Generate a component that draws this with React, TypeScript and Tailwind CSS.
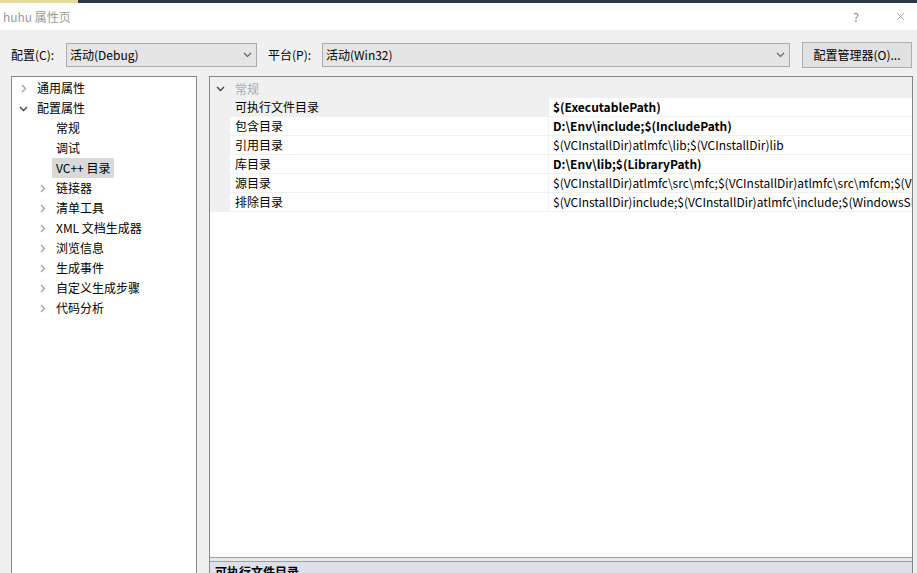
import { X } from 'lucide-react';

type TreeItem = { label: string; level: 0 | 1; state: 'closed' | 'open' | 'none'; selected?: boolean };

const tree: TreeItem[] = [
  { label: '通用属性', level: 0, state: 'closed' },
  { label: '配置属性', level: 0, state: 'open' },
  { label: '常规', level: 1, state: 'none' },
  { label: '调试', level: 1, state: 'none' },
  { label: 'VC++ 目录', level: 1, state: 'none', selected: true },
  { label: '链接器', level: 1, state: 'closed' },
  { label: '清单工具', level: 1, state: 'closed' },
  { label: 'XML 文档生成器', level: 1, state: 'closed' },
  { label: '浏览信息', level: 1, state: 'closed' },
  { label: '生成事件', level: 1, state: 'closed' },
  { label: '自定义生成步骤', level: 1, state: 'closed' },
  { label: '代码分析', level: 1, state: 'closed' },
];

const props = [
  { name: '可执行文件目录', value: '$(ExecutablePath)', bold: true },
  { name: '包含目录', value: 'D:\\Env\\include;$(IncludePath)', bold: true },
  { name: '引用目录', value: '$(VCInstallDir)atlmfc\\lib;$(VCInstallDir)lib', bold: false },
  { name: '库目录', value: 'D:\\Env\\lib;$(LibraryPath)', bold: true },
  { name: '源目录', value: '$(VCInstallDir)atlmfc\\src\\mfc;$(VCInstallDir)atlmfc\\src\\mfcm;$(VCInstallDir)atlmfc\\src\\atl;$(VCInstallDir)crt\\src', bold: false },
  { name: '排除目录', value: '$(VCInstallDir)include;$(VCInstallDir)atlmfc\\include;$(WindowsSDK_IncludePath);$(MSBuildToolsPath32)', bold: false },
];

const Chevron = ({ open, className = '' }: { open?: boolean; className?: string }) => (
  <svg width="9" height="9" viewBox="0 0 9 9" className={className}>
    {open ? (
      <polyline points="1,3 4.5,6.5 8,3" fill="none" stroke="#404040" strokeWidth="1.3" />
    ) : (
      <polyline points="3,1 6.5,4.5 3,8" fill="none" stroke="#a0a0a0" strokeWidth="1.3" />
    )}
  </svg>
);

const Combo = ({ text, width }: { text: string; width: string }) => (
  <div className={`${width} h-[24px] flex items-center justify-between border border-[#acacac] bg-[#e5e5e5] pl-[3px] pr-[4px]`}>
    <span className="text-[12px] text-[#000]">{text}</span>
    <svg width="9" height="6" viewBox="0 0 9 6">
      <polyline points="1,1 4.5,4.5 8,1" fill="none" stroke="#606060" strokeWidth="1.1" />
    </svg>
  </div>
);

export default function App() {
  return (
    <div className="w-[917px] h-[573px] overflow-hidden flex flex-col bg-[#f0f0f0] font-['Noto_Sans_CJK_SC','Noto_Sans',sans-serif] text-[12px] text-black leading-none">
      {/* top strip */}
      <div className="flex h-[3px] shrink-0">
        <div className="w-[78px] bg-[#e6d8a2]" />
        <div className="flex-1 bg-[#2c3a48]" />
      </div>

      {/* title bar */}
      <div className="h-[27px] shrink-0 bg-white flex items-center justify-between pl-[3px] pr-[10px]">
        <span className="text-[12px] text-[#9a9a9a]">huhu 属性页</span>
        <div className="flex items-center gap-[35px] text-[#8a8a8a]">
          <span className="text-[12px]">?</span>
          <X size={13} strokeWidth={1.2} />
        </div>
      </div>

      {/* config row */}
      <div className="h-[46px] shrink-0 flex items-center pt-[4px] pl-[11px]">
        <span className="w-[55px]">配置(C):</span>
        <Combo text="活动(Debug)" width="w-[191px]" />
        <span className="ml-[11px] w-[54px]">平台(P):</span>
        <Combo text="活动(Win32)" width="w-[468px]" />
        <button className="ml-[12px] w-[110px] h-[26px] border border-[#adadad] bg-[#e1e1e1] text-[12px]">
          配置管理器(O)...
        </button>
      </div>

      {/* main */}
      <div className="flex-1 flex pl-[11px] min-h-0">
        {/* tree */}
        <div className="w-[186px] border border-b-0 border-[#828790] bg-white pt-[1px]">
          {tree.map((t) => (
            <div key={t.label} className={`h-[20px] flex items-center ${t.level === 0 ? 'pl-[7px]' : 'pl-[26px]'}`}>
              <div className="w-[9px] flex items-center">
                {t.state !== 'none' && <Chevron open={t.state === 'open'} />}
              </div>
              <span
                className={`ml-[5px] h-[20px] flex items-center px-[4px] ${t.selected ? 'bg-[#d9d9d9]' : ''}`}
              >
                {t.label}
              </span>
            </div>
          ))}
        </div>

        {/* property grid */}
        <div className="ml-[12px] w-[704px] border border-b-0 border-[#828790] flex flex-col">
          <div className="flex-1 bg-white flex flex-col overflow-hidden">
            <div className="h-[21px] shrink-0 bg-[#f0f0f0] flex items-center pt-[2px]">
              <div className="w-[20px] flex justify-center">
                <Chevron open />
              </div>
              <span className="ml-[5px] text-[#a3abba]">常规</span>
            </div>
            {props.map((p, i) => (
              <div key={p.name} className="h-[19px] shrink-0 flex">
                <div className="w-[20px] shrink-0 bg-[#f0f0f0]" />
                <div
                  className={`w-[319px] shrink-0 flex items-center pl-[5px] border-b border-r border-[#f0f0f0] ${
                    i === 0 ? 'bg-[#f0f0f0]' : 'bg-white'
                  }`}
                >
                  {p.name}
                </div>
                <div className="flex-1 min-w-0 flex items-center pl-[4px] border-b border-[#f0f0f0] overflow-hidden whitespace-nowrap">
                  <span className={p.bold ? 'font-bold' : ''}>{p.value}</span>
                </div>
              </div>
            ))}
            <div className="flex-1" />
            <div className="h-[5px] shrink-0 bg-[#fafafa]" />
          </div>
          {/* splitter */}
          <div className="h-[5px] shrink-0 border-y border-[#a0a0a0] bg-[#e8e8e8]" />
          {/* description pane */}
          <div className="h-[11px] shrink-0 bg-[#dee1ea] pl-[5px] pt-[4px]">
            <span className="font-bold text-[12px]">可执行文件目录</span>
          </div>
        </div>
      </div>
    </div>
  );
}
